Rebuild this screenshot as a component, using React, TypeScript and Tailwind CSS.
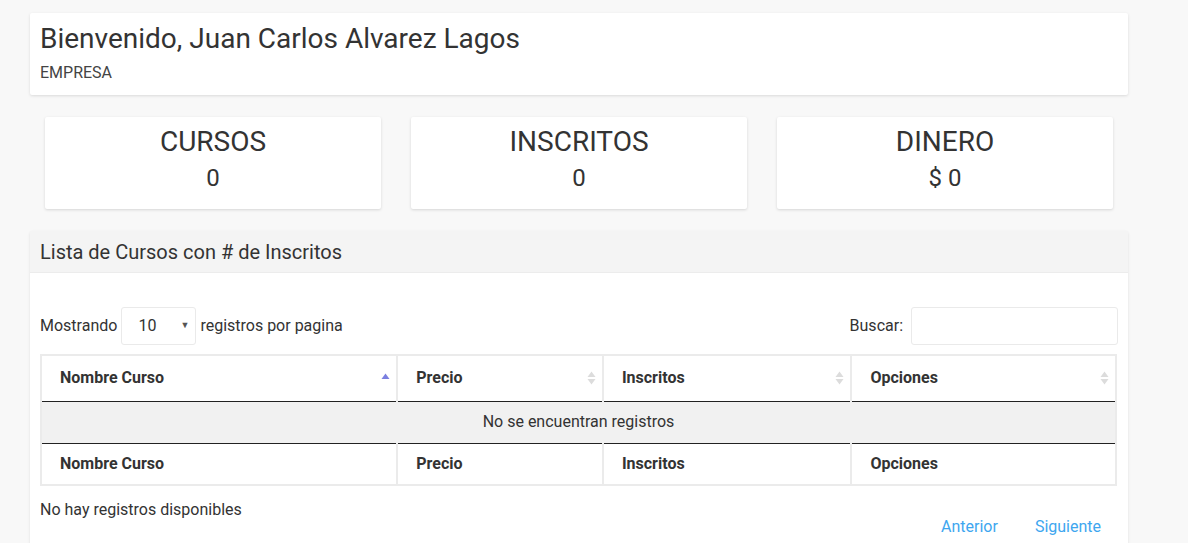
import React from "react";

const stats = [
  { label: "CURSOS", value: "0" },
  { label: "INSCRITOS", value: "0" },
  { label: "DINERO", value: "$ 0" },
];

const columns = [
  { name: "Nombre Curso", width: "w-[357px]", active: true },
  { name: "Precio", width: "w-[206px]", active: false },
  { name: "Inscritos", width: "w-[249px]", active: false },
  { name: "Opciones", width: "w-[265px]", active: false },
];

const SortIcon = ({ active }: { active: boolean }) =>
  active ? (
    <svg width="9" height="12" viewBox="0 0 9 12" className="shrink-0">
      <path d="M4.5 1.5 L8.5 7 L0.5 7 Z" fill="#7b7fe0" />
    </svg>
  ) : (
    <svg width="9" height="16" viewBox="0 0 9 16" className="shrink-0">
      <path d="M4.5 1.5 L8.5 7 L0.5 7 Z" fill="#dcdcdc" />
      <path d="M4.5 14.5 L8.5 9 L0.5 9 Z" fill="#dcdcdc" />
    </svg>
  );

export default function App() {
  return (
    <div className="min-h-[543px] bg-[#f8f8f8] font-['Roboto',sans-serif] text-[#333]">
      <div className="ml-[30px] w-[1098px] pt-[13px]">
        <div className="rounded-[2px] bg-white px-[10px] pb-[13px] pt-[10px] shadow-[0_1px_3px_rgba(0,0,0,0.12)]">
          <h1 className="text-[28px] leading-[32px] text-[#333]">Bienvenido, Juan Carlos Alvarez Lagos</h1>
          <p className="mt-[9px] text-[16px] leading-[18px] text-[#444]">EMPRESA</p>
        </div>

        <div className="mt-[22px] grid grid-cols-3 gap-[30px] px-[15px]">
          {stats.map((s) => (
            <div
              key={s.label}
              className="flex h-[92px] flex-col items-center rounded-[2px] bg-white pt-[9px] shadow-[0_1px_3px_rgba(0,0,0,0.14)]"
            >
              <div className="text-[28px] leading-[32px]">{s.label}</div>
              <div className="mt-[6px] text-[24px] leading-[28px]">{s.value}</div>
            </div>
          ))}
        </div>

        <div className="mt-[22px] rounded-[2px] bg-white shadow-[0_1px_3px_rgba(0,0,0,0.1)]">
          <div className="flex h-[42px] items-center border-b border-[#ececec] bg-[#f4f4f4] px-[10px] text-[20px]">
            Lista de Cursos con # de Inscritos
          </div>
          <div className="px-[10px] pb-[10px] pt-[34px]">
            <div className="flex items-center justify-between">
              <div className="flex items-center text-[16px]">
                <span>Mostrando</span>
                <div className="mx-[4px] flex h-[38px] w-[75px] items-center justify-between rounded-[3px] border border-[#eaeaea] pl-[16px] pr-[6px] text-[16px]">
                  <span>10</span>
                  <span className="text-[9px] text-[#555]">▼</span>
                </div>
                <span>registros por pagina</span>
              </div>
              <div className="flex items-center text-[16px]">
                <span className="mr-[8px]">Buscar:</span>
                <div className="h-[38px] w-[207px] rounded-[3px] border border-[#eaeaea]" />
              </div>
            </div>

            <table className="mt-[9px] w-[1077px] border-collapse border-2 border-[#ebebeb] text-[16px]">
              <thead>
                <tr className="h-[46px] border-b border-[#222]">
                  {columns.map((c) => (
                    <th key={c.name} className={`${c.width} border-x-2 border-[#ebebeb] pl-[18px] pr-[6px] text-left font-bold`}>
                      <div className="flex items-center justify-between">
                        <span>{c.name}</span>
                        <SortIcon active={c.active} />
                      </div>
                    </th>
                  ))}
                </tr>
              </thead>
              <tbody>
                <tr className="h-[42px] border-b border-[#222] bg-[#f1f1f1]">
                  <td colSpan={4} className="text-center">
                    No se encuentran registros
                  </td>
                </tr>
              </tbody>
              <tfoot>
                <tr className="h-[42px]">
                  {columns.map((c) => (
                    <th key={c.name} className="border-x-2 border-[#ebebeb] pl-[18px] text-left font-bold">
                      {c.name}
                    </th>
                  ))}
                </tr>
              </tfoot>
            </table>

            <div className="flex items-start justify-between">
              <div className="pt-[12px] text-[16px]">No hay registros disponibles</div>
              <div className="flex gap-[37px] pr-[17px] pt-[29px] text-[16px] text-[#3ea6ef]">
                <span>Anterior</span>
                <span>Siguiente</span>
              </div>
            </div>
          </div>
        </div>
      </div>
    </div>
  );
}
